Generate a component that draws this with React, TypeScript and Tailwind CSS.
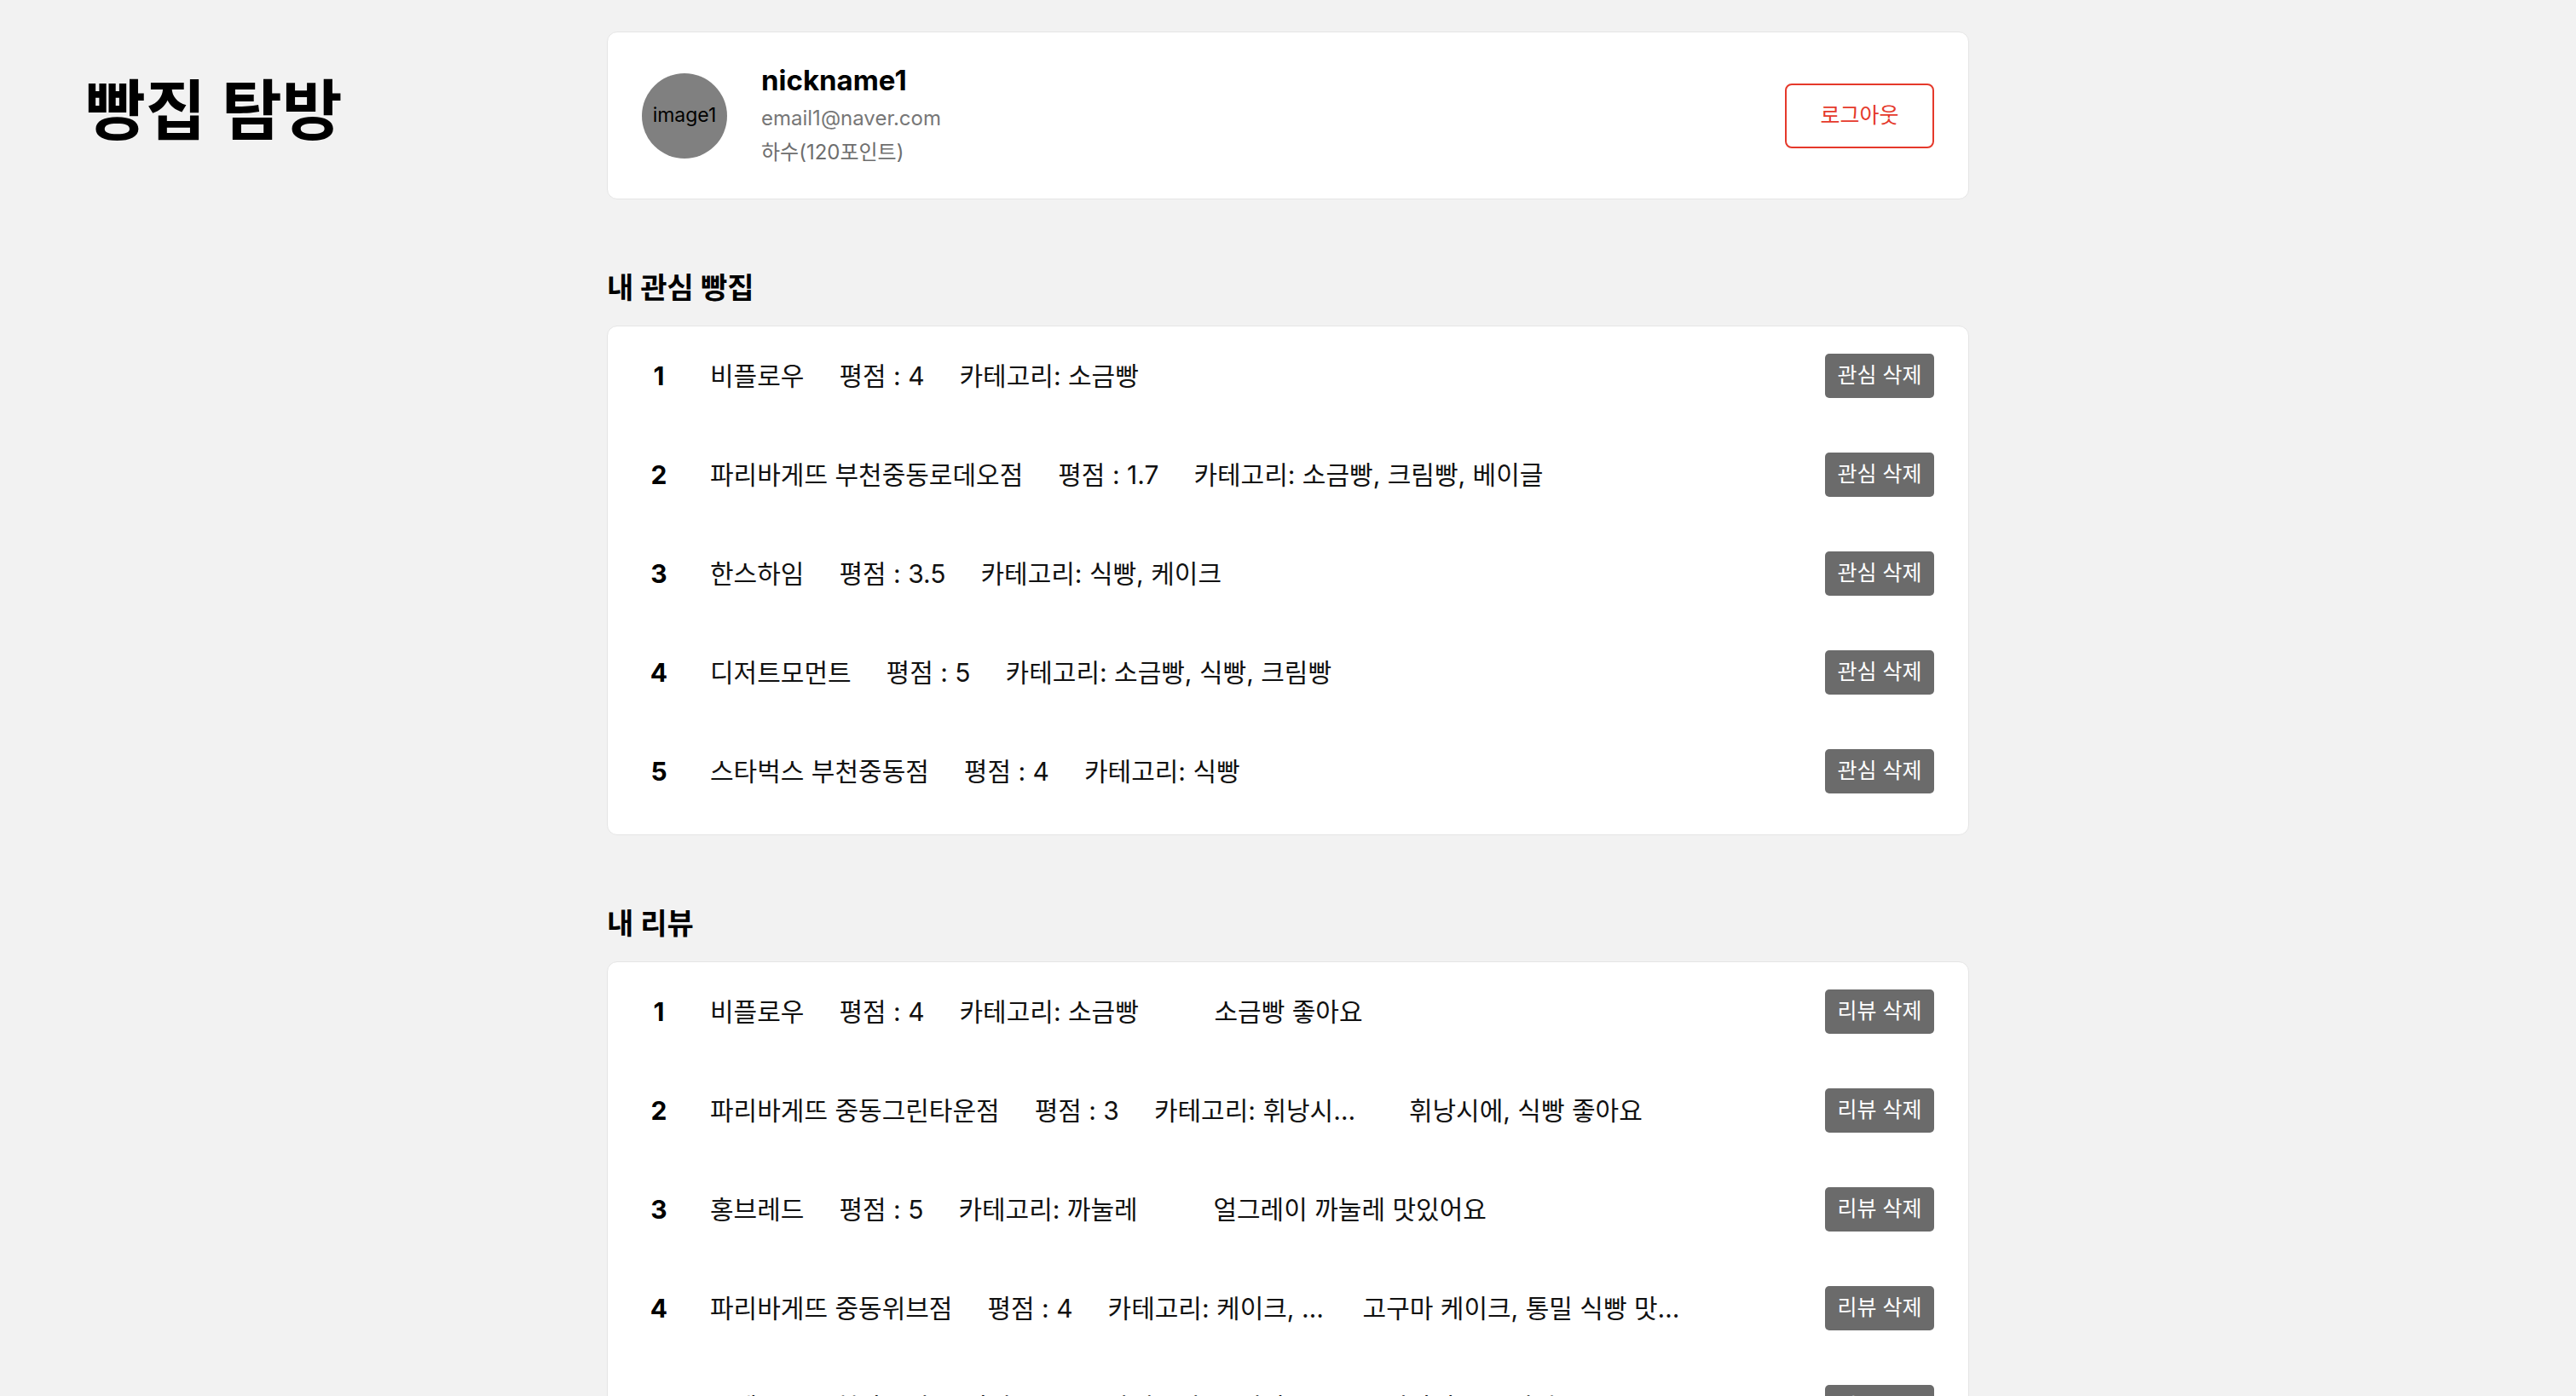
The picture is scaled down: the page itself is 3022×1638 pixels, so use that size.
const font = "font-['Inter','Noto_Sans_CJK_KR',sans-serif]";

type Bakery = { name: string; rating: string; category: string };
type Review = Bakery & { text: string };

const likes: Bakery[] = [
  { name: "비플로우", rating: "4", category: "소금빵" },
  { name: "파리바게뜨 부천중동로데오점", rating: "1.7", category: "소금빵, 크림빵, 베이글" },
  { name: "한스하임", rating: "3.5", category: "식빵, 케이크" },
  { name: "디저트모먼트", rating: "5", category: "소금빵, 식빵, 크림빵" },
  { name: "스타벅스 부천중동점", rating: "4", category: "식빵" },
];

const reviews: Review[] = [
  { name: "비플로우", rating: "4", category: "소금빵", text: "소금빵 좋아요" },
  { name: "파리바게뜨 중동그린타운점", rating: "3", category: "휘낭시에, 식빵", text: "휘낭시에, 식빵 좋아요" },
  { name: "홍브레드", rating: "5", category: "까눌레", text: "얼그레이 까눌레 맛있어요" },
  { name: "파리바게뜨 중동위브점", rating: "4", category: "케이크, 식빵", text: "고구마 케이크, 통밀 식빵 맛있어요" },
  { name: "뚜레쥬르 부천상동점", rating: "4.5", category: "크림빵", text: "크림빵이 부드러워요" },
];

function Row({ no, children, action }: { no: number; children: React.ReactNode; action: string }) {
  return (
    <div className="flex h-[116px] items-center px-10">
      <span className="w-10 text-center text-[30px] font-bold text-black">{no}</span>
      <div className="ml-10 flex min-w-0 flex-1 items-center gap-[41px] text-[30px] text-[#111]">{children}</div>
      <button className="flex h-[52px] w-[128px] items-center justify-center rounded-[5px] bg-[#6b6b6b] text-[25px] text-white">
        {action}
      </button>
    </div>
  );
}

function Section({ title, children }: { title: string; children: React.ReactNode }) {
  return (
    <section>
      <h2 className="mt-[82px] mb-[22px] text-[34px] font-bold leading-[44px] text-black">{title}</h2>
      <div className="rounded-[12px] border border-[#e5e5e5] bg-white pb-4">{children}</div>
    </section>
  );
}

export default function App() {
  return (
    <div className={`min-h-screen bg-[#f2f2f2] ${font}`}>
      <div className="grid grid-cols-[1fr_1598px_1fr]">
        {/* left title */}
        <div className="pl-[100px] pt-[92px]">
          <h1 className="text-[77px] font-bold leading-[77px] text-black">빵집 탐방</h1>
        </div>

        <main className="pt-[37px] pb-20">
          {/* profile */}
          <div className="flex h-[197px] items-center rounded-[12px] border border-[#e5e5e5] bg-white px-10">
            <div className="flex h-[100px] w-[100px] items-center justify-center rounded-full bg-[#808080] text-[23px] text-black">
              image1
            </div>
            <div className="ml-10 flex-1">
              <div className="mb-[3px] text-[33px] font-bold leading-[44px] text-black">nickname1</div>
              <div className="text-[24px] leading-[40px] text-[#777]">email1@naver.com</div>
              <div className="text-[24px] leading-[40px] text-[#6e6e6e]">하수(120포인트)</div>
            </div>
            <button className="flex h-[76px] w-[175px] items-center justify-center rounded-[8px] border-2 border-[#e5392b] text-[25px] text-[#e5392b]">
              로그아웃
            </button>
          </div>

          <Section title="내 관심 빵집">
            {likes.map((b, i) => (
              <Row key={i} no={i + 1} action="관심 삭제">
                <span className="whitespace-nowrap">{b.name}</span>
                <span className="whitespace-nowrap">평점 : {b.rating}</span>
                <span className="whitespace-nowrap">카테고리: {b.category}</span>
              </Row>
            ))}
          </Section>

          <Section title="내 리뷰">
            {reviews.map((r, i) => (
              <Row key={i} no={i + 1} action="리뷰 삭제">
                <span className="whitespace-nowrap">{r.name}</span>
                <span className="whitespace-nowrap">평점 : {r.rating}</span>
                <span className="w-[258px] shrink-0 truncate">카테고리: {r.category}</span>
                <span className="max-w-[380px] truncate">{r.text}</span>
              </Row>
            ))}
          </Section>
        </main>
        <div />
      </div>
    </div>
  );
}
